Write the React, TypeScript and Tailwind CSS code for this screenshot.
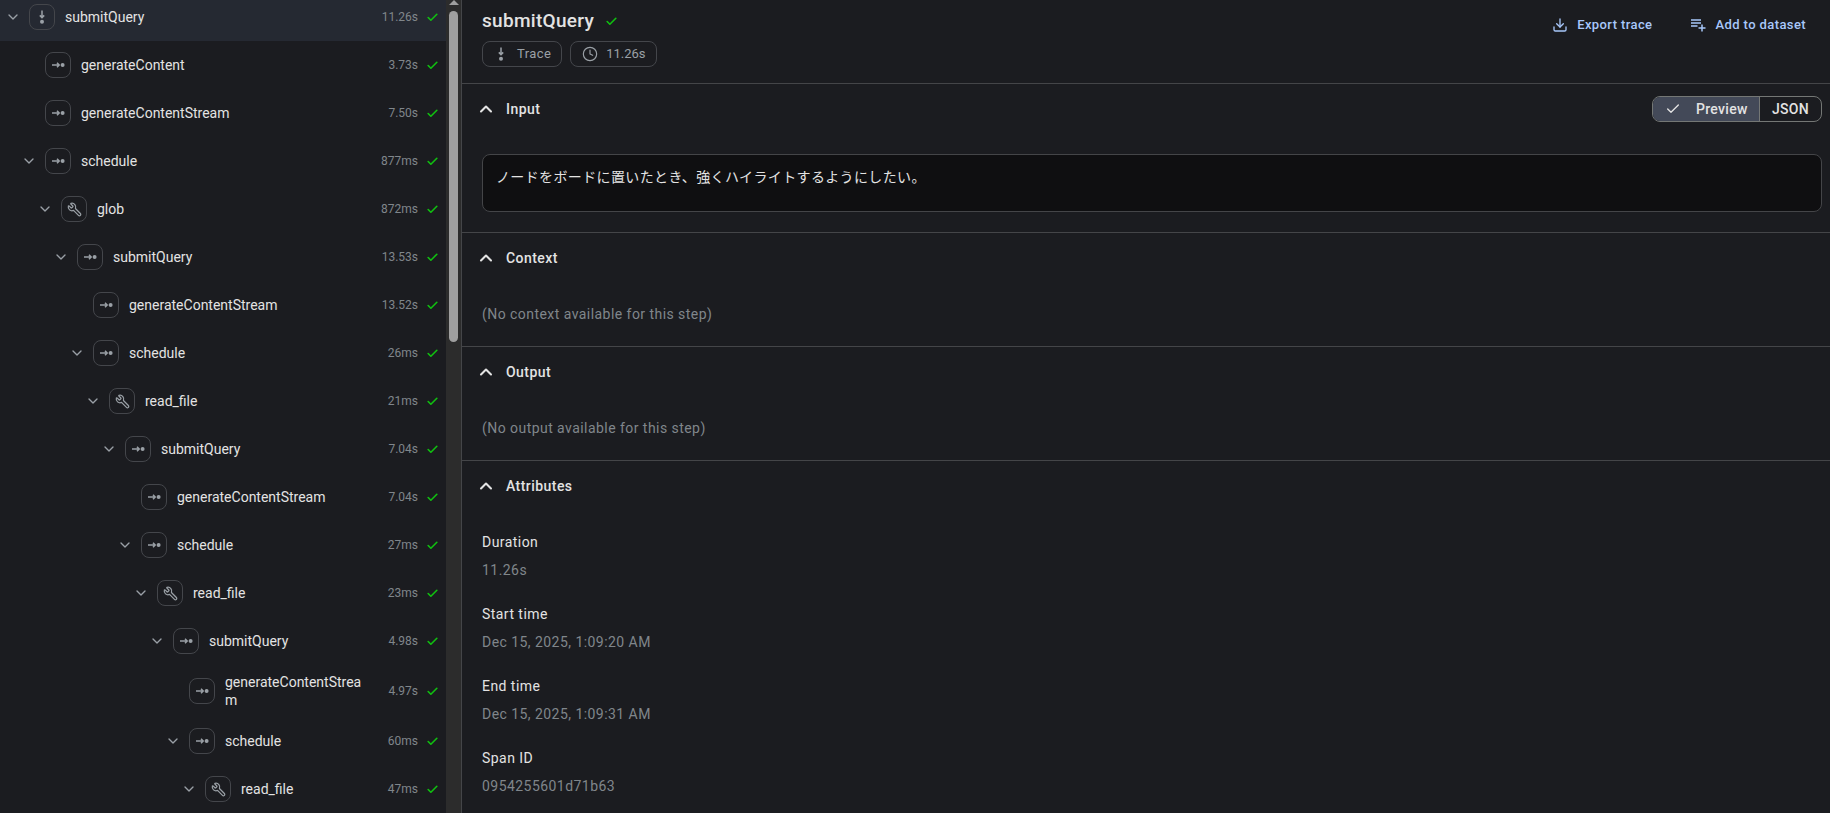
import { Check, ChevronDown, ChevronUp, Clock, Download, Wrench } from 'lucide-react'

type Kind = 'trace' | 'span' | 'tool'

const rows: { name: string; time: string; depth: number; kind: Kind; open?: boolean; selected?: boolean }[] = [
  { name: 'submitQuery', time: '11.26s', depth: 0, kind: 'trace', open: true, selected: true },
  { name: 'generateContent', time: '3.73s', depth: 1, kind: 'span' },
  { name: 'generateContentStream', time: '7.50s', depth: 1, kind: 'span' },
  { name: 'schedule', time: '877ms', depth: 1, kind: 'span', open: true },
  { name: 'glob', time: '872ms', depth: 2, kind: 'tool', open: true },
  { name: 'submitQuery', time: '13.53s', depth: 3, kind: 'span', open: true },
  { name: 'generateContentStream', time: '13.52s', depth: 4, kind: 'span' },
  { name: 'schedule', time: '26ms', depth: 4, kind: 'span', open: true },
  { name: 'read_file', time: '21ms', depth: 5, kind: 'tool', open: true },
  { name: 'submitQuery', time: '7.04s', depth: 6, kind: 'span', open: true },
  { name: 'generateContentStream', time: '7.04s', depth: 7, kind: 'span' },
  { name: 'schedule', time: '27ms', depth: 7, kind: 'span', open: true },
  { name: 'read_file', time: '23ms', depth: 8, kind: 'tool', open: true },
  { name: 'submitQuery', time: '4.98s', depth: 9, kind: 'span', open: true },
  { name: 'generateContentStream', time: '4.97s', depth: 10, kind: 'span' },
  { name: 'schedule', time: '60ms', depth: 10, kind: 'span', open: true },
  { name: 'read_file', time: '47ms', depth: 11, kind: 'tool', open: true },
]

function TraceIcon({ className }: { className?: string }) {
  return (
    <svg viewBox="0 0 16 16" className={className} fill="none" stroke="currentColor" strokeWidth="1.5">
      <path d="M8 1.5v7M5.8 6.4 8 8.6l2.2-2.2" />
      <circle cx="8" cy="12.8" r="2" fill="currentColor" stroke="none" />
    </svg>
  )
}

function SpanIcon({ className }: { className?: string }) {
  return (
    <svg viewBox="0 0 16 16" className={className} fill="none" stroke="currentColor" strokeWidth="1.5">
      <path d="M2 8h7.2M7 5.8 9.2 8 7 10.2" />
      <circle cx="12.6" cy="8" r="2" fill="currentColor" stroke="none" />
    </svg>
  )
}

function AddListIcon({ className }: { className?: string }) {
  return (
    <svg viewBox="0 0 16 16" className={className} fill="none" stroke="currentColor" strokeWidth="1.5">
      <path d="M1 3h10M1 6h10M1 9h6.5M12 7.5v7M8.5 11h7" />
    </svg>
  )
}

function TreeRow({ row }: { row: (typeof rows)[number] }) {
  return (
    <div
      className={`flex min-h-12 items-center py-2 pr-[7px] ${row.selected ? 'bg-[#252932]' : ''}`}
      style={{ paddingLeft: 1 + row.depth * 16 }}
    >
      <div className="flex w-[24px] shrink-0 justify-center">
        {row.open && <ChevronDown className="size-4 text-[#9aa0a6]" />}
      </div>
      <div className="ml-[4px] flex size-[26px] shrink-0 items-center justify-center rounded-lg border border-[#44464b] text-[#9aa0a6]">
        {row.kind === 'trace' && <TraceIcon className="size-4" />}
        {row.kind === 'span' && <SpanIcon className="size-4" />}
        {row.kind === 'tool' && <Wrench className="size-[15px] -scale-x-100" />}
      </div>
      <span className="ml-[10px] min-w-0 flex-1 break-all pr-6 text-sm leading-[18px] text-[#e3e3e3]">{row.name}</span>
      <span className="text-xs text-[#80868b]">{row.time}</span>
      <Check className="ml-2 size-[13px] shrink-0 text-[#10c010]" strokeWidth={3} />
    </div>
  )
}

function Section({ title, children, right }: { title: string; children?: React.ReactNode; right?: React.ReactNode }) {
  return (
    <section className="border-b border-[#444548]">
      <div className="flex h-[50px] items-center justify-between pl-[14px] pr-[8px]">
        <div className="flex items-center gap-[10px]">
          <ChevronUp className="size-5 text-[#e3e3e3]" strokeWidth={2.5} />
          <h2 className="text-sm font-medium tracking-[0.45px] text-[#e3e3e3]">{title}</h2>
        </div>
        {right}
      </div>
      {children}
    </section>
  )
}

function Attr({ label, value }: { label: string; value: string }) {
  return (
    <div className="mb-6">
      <div className="text-sm leading-5 tracking-[0.45px] text-[#e3e3e3]">{label}</div>
      <div className="mt-2 text-sm leading-5 tracking-[0.45px] text-[#80868b]">{value}</div>
    </div>
  )
}

export default function App() {
  return (
    <div className="flex h-[813px] w-[1830px] overflow-hidden bg-[#1b1c20] font-['Roboto','Noto_Sans_CJK_JP',sans-serif]">
      <aside className="flex w-[462px] shrink-0 border-r border-[#444548]">
        <div className="w-[446px] shrink-0 overflow-hidden">
          <div className="-mt-[7px]">
            {rows.map((row, i) => (
              <TreeRow key={i} row={row} />
            ))}
          </div>
        </div>
        <div className="relative flex-1 bg-[#2c2c2c]">
          <div className="absolute left-[3px] top-[11px] h-[331px] w-[9px] rounded-full bg-[#9f9f9f]" />
          <div className="absolute left-[3px] top-0 size-0 border-x-[5px] border-b-[5px] border-x-transparent border-b-[#9f9f9f]" />
        </div>
      </aside>

      <main className="min-w-0 flex-1">
        <header className="flex h-[84px] justify-between border-b border-[#444548] pl-[20px] pr-[24px]">
          <div>
            <div className="mt-[9px] flex items-center gap-[11px]">
              <h1 className="text-[19px] font-medium leading-[24px] tracking-[0.3px] text-[#e3e3e3]">submitQuery</h1>
              <Check className="size-[13px] text-[#10c010]" strokeWidth={3} />
            </div>
            <div className="mt-2 flex gap-2 text-[13px] text-[#9aa0a6]">
              <span className="flex h-[26px] items-center gap-2 rounded-lg border border-[#44464b] pl-[10px] pr-[10px] tracking-[0.4px]">
                <TraceIcon className="size-4" /> Trace
              </span>
              <span className="flex h-[26px] items-center gap-2 rounded-lg border border-[#44464b] pl-[11px] pr-[10px]">
                <Clock className="size-4" strokeWidth={1.75} /> 11.26s
              </span>
            </div>
          </div>
          <div className="mt-4 flex h-[18px] gap-[38px] text-[13px] font-medium tracking-[0.4px] text-[#a8c7fa]">
            <button className="flex items-center gap-[9px]">
              <Download className="size-4" /> Export trace
            </button>
            <button className="flex items-center gap-[9px]">
              <AddListIcon className="size-4" /> Add to dataset
            </button>
          </div>
        </header>

        <Section
          title="Input"
          right={
            <div className="flex h-[26px] overflow-hidden rounded-lg border border-[#747775] text-sm font-medium tracking-[0.3px] text-[#e3e3e3]">
              <span className="flex w-[106px] items-center gap-[15px] bg-[#434958] pl-[12px]">
                <Check className="size-4" /> Preview
              </span>
              <span className="flex w-[62px] items-center justify-center border-l border-[#747775]">JSON</span>
            </div>
          }
        >
          <div className="pb-5 pl-[20px] pr-[8px] pt-5">
            <div className="h-[58px] rounded-lg border border-[#444548] bg-[#0f0f11] px-[13px] pt-3 text-sm leading-5 tracking-[0.37px] text-[#e3e3e3]">
              ノードをボードに置いたとき、強くハイライトするようにしたい。
            </div>
          </div>
        </Section>

        <Section title="Context">
          <p className="px-[20px] pb-[22px] pt-[21px] text-sm leading-5 tracking-[0.45px] text-[#80868b]">(No context available for this step)</p>
        </Section>

        <Section title="Output">
          <p className="px-[20px] pb-[22px] pt-[21px] text-sm leading-5 tracking-[0.45px] text-[#80868b]">(No output available for this step)</p>
        </Section>

        <section>
          <div className="flex h-[50px] items-center gap-[10px] pl-[14px]">
            <ChevronUp className="size-5 text-[#e3e3e3]" strokeWidth={2.5} />
            <h2 className="text-sm font-medium tracking-[0.45px] text-[#e3e3e3]">Attributes</h2>
          </div>
          <div className="px-[20px] pt-[21px]">
            <Attr label="Duration" value="11.26s" />
            <Attr label="Start time" value="Dec 15, 2025, 1:09:20 AM" />
            <Attr label="End time" value="Dec 15, 2025, 1:09:31 AM" />
            <Attr label="Span ID" value="0954255601d71b63" />
          </div>
        </section>
      </main>
    </div>
  )
}
